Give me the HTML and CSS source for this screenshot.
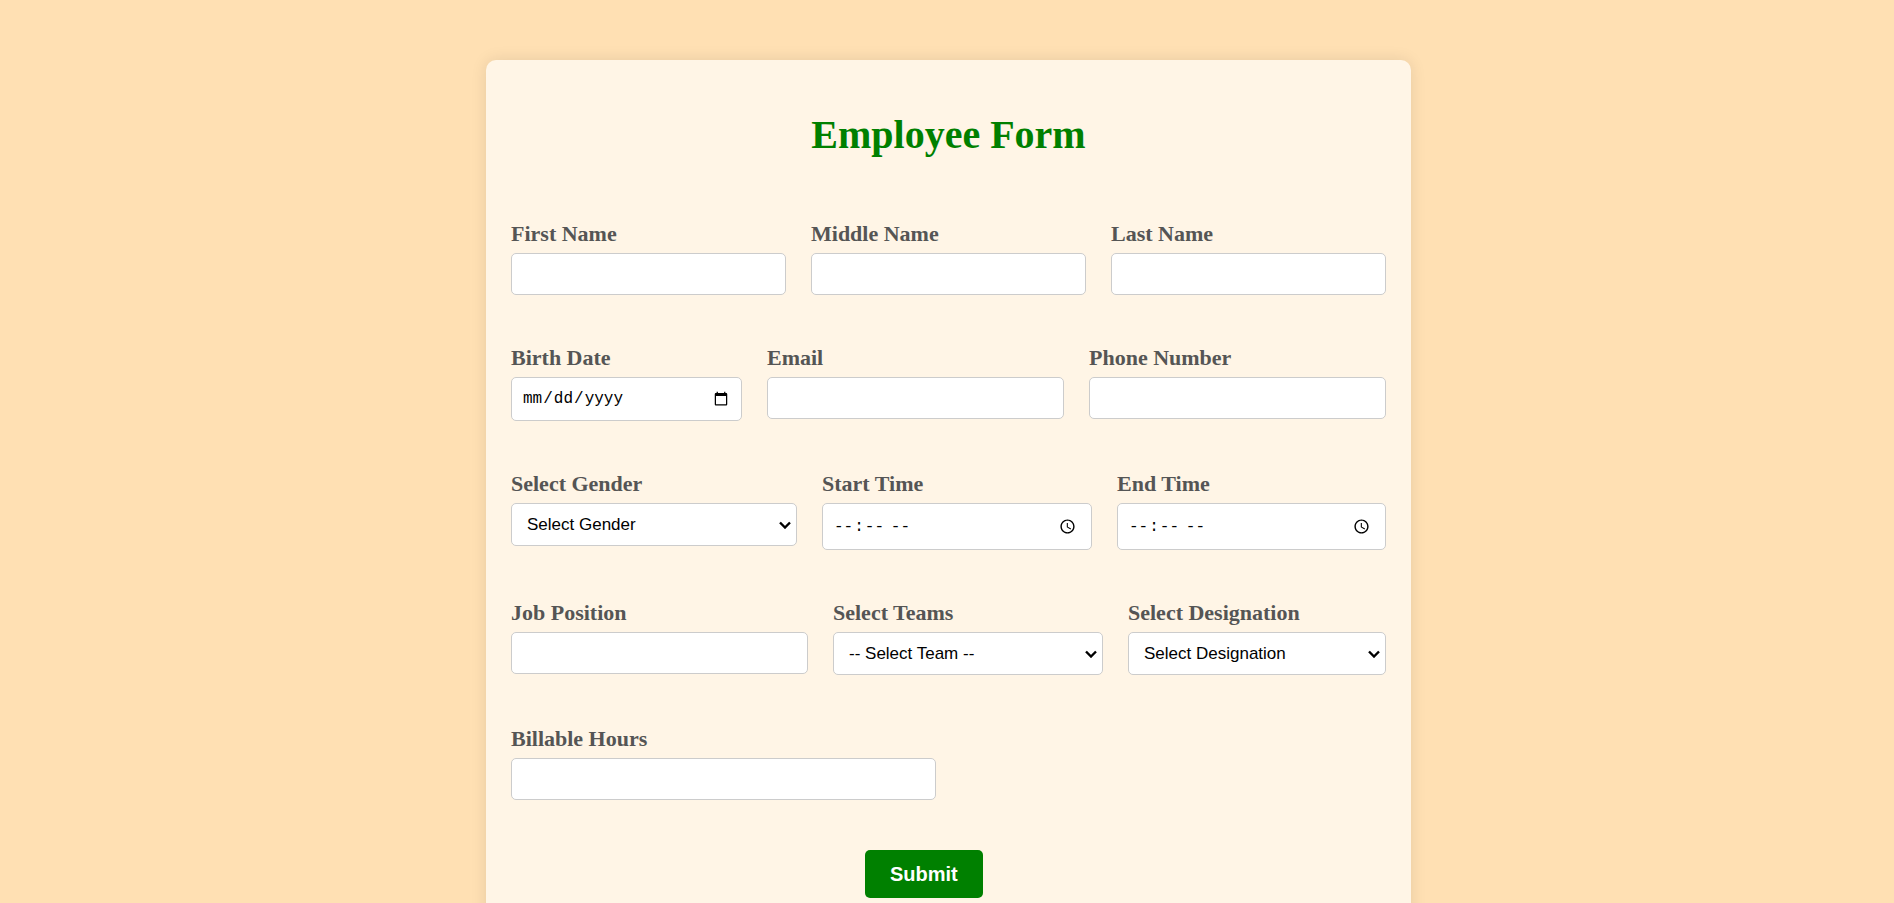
FILE: index.html
```
<!DOCTYPE html>
<html lang="en">
<head>
<meta charset="utf-8">
<title>Employee Form</title>
<link rel="stylesheet" href="styles.css">
</head>
<body>
<form class="card">
  <h1 class="title">Employee Form</h1>
  <div class="row">
    <div class="field"><label for="first">First Name</label><input id="first" type="text"></div>
    <div class="field"><label for="middle">Middle Name</label><input id="middle" type="text"></div>
    <div class="field"><label for="last">Last Name</label><input id="last" type="text"></div>
  </div>
  <div class="row row-birth">
    <div class="field"><label for="birth">Birth Date</label><input id="birth" type="date"></div>
    <div class="field"><label for="email">Email</label><input id="email" type="email"></div>
    <div class="field"><label for="phone">Phone Number</label><input id="phone" type="tel"></div>
  </div>
  <div class="row row-time">
    <div class="field"><label for="gender">Select Gender</label><select id="gender"><option>Select Gender</option><option>Male</option><option>Female</option></select></div>
    <div class="field"><label for="start">Start Time</label><input id="start" type="time"></div>
    <div class="field"><label for="end">End Time</label><input id="end" type="time"></div>
  </div>
  <div class="row row-job">
    <div class="field"><label for="job">Job Position</label><input id="job" type="text"></div>
    <div class="field"><label for="team">Select Teams</label><select id="team"><option>-- Select Team --</option></select></div>
    <div class="field"><label for="designation">Select Designation</label><select id="designation"><option>Select Designation</option></select></div>
  </div>
  <div class="row row-half">
    <div class="field"><label for="hours">Billable Hours</label><input id="hours" type="text"></div>
  </div>
  <button class="submit" type="submit">Submit</button>
</form>
</body>
</html>
```
FILE: styles.css
```
* { box-sizing: border-box; }
body {
  margin: 0;
  padding: 60px 20px 60px 23px;
  background: #ffe0b3;
  font-family: "Liberation Serif", "Times New Roman", serif;
}
.card {
  max-width: 925px;
  margin: 0 auto;
  padding: 25px;
  background: #fff5e6;
  border-radius: 10px;
  box-shadow: 0 0 16px rgba(0, 0, 0, 0.1);
}
.title {
  margin: 25px 0 61px;
  font-size: 40px;
  line-height: 50px;
  text-align: center;
  color: green;
}
.row {
  display: grid;
  grid-template-columns: 1fr 1fr 1fr;
  gap: 25px;
  align-items: start;
  margin-bottom: 50px;
}
.row-birth { grid-template-columns: 231fr 297fr 297fr; }
.row-time { grid-template-columns: 286fr 270fr 269fr; }
.row-job { grid-template-columns: 297fr 270fr 258fr; margin-bottom: 51px; }
.row-half { grid-template-columns: 1fr 1fr; }
.field { display: flex; flex-direction: column; gap: 7px; }
label {
  font-size: 22px;
  line-height: 25px;
  font-weight: bold;
  color: #555;
}
input, select {
  width: 100%;
  height: 42px;
  padding: 10px;
  border: 1px solid #ccc;
  border-radius: 5px;
  background: #fff;
  color: #000;
  font: 17px "Liberation Sans", Arial, sans-serif;
}
select {
  appearance: none;
  height: 43px;
  padding: 10px 25px 10px 15px;
  background: #fff url("data:image/svg+xml,%3Csvg xmlns='http://www.w3.org/2000/svg' width='12' height='8' viewBox='0 0 12 8'%3E%3Cpath d='M1 1.5 6 6.5 11 1.5' fill='none' stroke='%23000' stroke-width='2.4'/%3E%3C/svg%3E") no-repeat right 5px center;
}
input[type="date"], input[type="time"] { font: 16px "Liberation Mono", monospace; }
input[type="date"] { height: 44px; padding: 10px; }
input[type="time"] { height: 47px; padding: 12px 12px 12px 10px; }
.submit {
  display: block;
  margin-left: 354px;
  height: 48px;
  padding: 0 25px;
  border: 0;
  border-radius: 5px;
  background: green;
  color: #fff;
  font: bold 20px "Liberation Sans", Arial, sans-serif;
}
```
